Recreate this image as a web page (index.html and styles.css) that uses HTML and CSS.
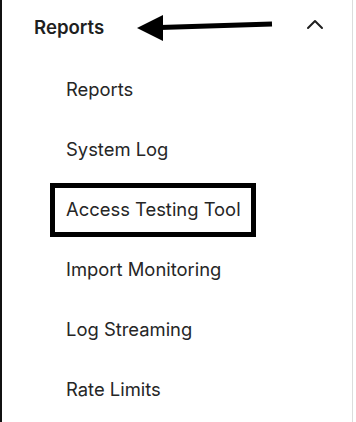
FILE: index.html
```html
<!DOCTYPE html>
<html lang="en">
<head>
    <meta charset="UTF-8">
    <meta name="viewport" content="width=device-width, initial-scale=1.0">
    <title>Reports menu</title>
    <link rel="stylesheet" href="styles.css">
</head>
<body>
    <div class="frame">
        <div class="edge"></div>
        <nav class="panel">
            <div class="group-header">
                <span class="group-title">Reports</span>
                <svg class="callout-arrow" width="150" height="35" viewBox="0 0 150 35">
                    <line x1="30" y1="18.5" x2="142" y2="15" stroke="#000" stroke-width="5" />
                    <polygon points="7,19 33,6 33,32" fill="#000" />
                </svg>
                <svg class="chevron" width="20" height="24" viewBox="0 0 20 24">
                    <polyline points="3,13 10,6 17,13" fill="none" stroke="#1f1f1f" stroke-width="2" stroke-linecap="round" stroke-linejoin="round" />
                </svg>
            </div>
            <ul class="sub-menu">
                <li><a href="#">Reports</a></li>
                <li><a href="#">System Log</a></li>
                <li><a href="#" class="highlighted">Access Testing Tool</a></li>
                <li><a href="#">Import Monitoring</a></li>
                <li><a href="#">Log Streaming</a></li>
                <li><a href="#">Rate Limits</a></li>
            </ul>
        </nav>
    </div>
</body>
</html>
```

FILE: styles.css
```css
* {
    margin: 0;
    padding: 0;
    box-sizing: border-box;
}

body {
    font-family: 'Inter', 'Noto Sans', sans-serif;
    background-color: #fff;
    color: #262626;
}

.frame {
    display: flex;
    height: 422px;
}

.edge {
    width: 2px;
    background-color: #111;
}

.panel {
    width: 351px;
    border-right: 1px solid #dcdcdc;
}

.group-header {
    position: relative;
    display: flex;
    align-items: flex-start;
    padding: 15px 27px 20px 32px;
}

.group-title {
    font-size: 18.6px;
    font-weight: 600;
    line-height: 24px;
    color: #1f1f1f;
}

.callout-arrow {
    position: absolute;
    left: 128px;
    top: 9px;
}

.chevron {
    margin-left: auto;
}

.sub-menu {
    list-style: none;
}

.sub-menu li {
    height: 60px;
    line-height: 60px;
    padding-left: 64px;
    font-size: 18.4px;
}

.sub-menu a {
    color: #262626;
    text-decoration: none;
}

.highlighted {
    position: relative;
    display: inline-block;
    line-height: 24px;
}

.highlighted::after {
    content: '';
    position: absolute;
    top: -14px;
    bottom: -16px;
    left: -16px;
    right: -15px;
    border: 5px solid #000;
}
```
